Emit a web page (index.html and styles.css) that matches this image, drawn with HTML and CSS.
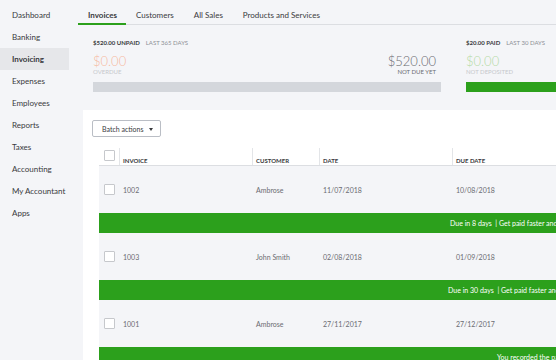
FILE: index.html
```html
<!DOCTYPE html>
<html lang="en">
<head>
    <meta charset="UTF-8">
    <meta name="viewport" content="width=device-width, initial-scale=1.0">
    <title>Invoicing</title>
    <link rel="stylesheet" href="styles.css">
</head>
<body>
    <aside class="sidebar">
        <a class="nav-item">Dashboard</a>
        <a class="nav-item">Banking</a>
        <a class="nav-item active">Invoicing</a>
        <a class="nav-item">Expenses</a>
        <a class="nav-item">Employees</a>
        <a class="nav-item">Reports</a>
        <a class="nav-item">Taxes</a>
        <a class="nav-item">Accounting</a>
        <a class="nav-item">My Accountant</a>
        <a class="nav-item">Apps</a>
    </aside>

    <main class="main">
        <nav class="tabs">
            <a class="tab active">Invoices</a>
            <a class="tab">Customers</a>
            <a class="tab">All Sales</a>
            <a class="tab">Products and Services</a>
        </nav>

        <section class="summary">
            <div class="summary-block">
                <div class="summary-title"><b>$520.00 UNPAID</b><span>LAST 365 DAYS</span></div>
                <div class="figures">
                    <div class="figure">
                        <div class="amount overdue">$0.00</div>
                        <div class="caption">OVERDUE</div>
                    </div>
                    <div class="figure right">
                        <div class="amount due">$520.00</div>
                        <div class="caption dark">NOT DUE YET</div>
                    </div>
                </div>
                <div class="bar grey"></div>
            </div>
            <div class="summary-block">
                <div class="summary-title"><b>$20.00 PAID</b><span>LAST 30 DAYS</span></div>
                <div class="figures">
                    <div class="figure">
                        <div class="amount deposit">$0.00</div>
                        <div class="caption">NOT DEPOSITED</div>
                    </div>
                </div>
                <div class="bar green"></div>
            </div>
        </section>

        <section class="panel">
            <button class="batch">Batch actions <span class="caret"></span></button>

            <div class="table">
                <div class="row head">
                    <div class="cell"><span class="check"></span></div>
                    <div class="cell">INVOICE</div>
                    <div class="cell">CUSTOMER</div>
                    <div class="cell">DATE</div>
                    <div class="cell">DUE DATE</div>
                </div>

                <div class="row">
                    <div class="cell"><span class="check"></span></div>
                    <div class="cell">1002</div>
                    <div class="cell">Ambrose</div>
                    <div class="cell">11/07/2018</div>
                    <div class="cell">10/08/2018</div>
                </div>
                <div class="banner">Due in 8 days &nbsp;| Get paid faster and easier with online payments</div>

                <div class="row">
                    <div class="cell"><span class="check"></span></div>
                    <div class="cell">1003</div>
                    <div class="cell">John Smith</div>
                    <div class="cell">02/08/2018</div>
                    <div class="cell">01/09/2018</div>
                </div>
                <div class="banner wide">Due in 30 days &nbsp;| Get paid faster and easier with online payments</div>

                <div class="row">
                    <div class="cell"><span class="check"></span></div>
                    <div class="cell">1001</div>
                    <div class="cell">Ambrose</div>
                    <div class="cell">27/11/2017</div>
                    <div class="cell">27/12/2017</div>
                </div>
                <div class="banner note">You recorded the payment on 27/11/2017</div>
            </div>
        </section>
    </main>
</body>
</html>
```

FILE: styles.css
```css
* {
    box-sizing: border-box;
}
body {
    margin: 0;
    width: 556px;
    height: 360px;
    overflow: hidden;
    display: flex;
    font-family: Lato, "Open Sans", Arial, sans-serif;
    color: #393a3d;
    background-color: #f4f5f8;
}

/* sidebar */
.sidebar {
    width: 78px;
    flex-shrink: 0;
    padding-top: 4px;
    display: flex;
    flex-direction: column;
}
.nav-item {
    width: 69px;
    height: 22px;
    line-height: 22px;
    padding-left: 12px;
    font-size: 8px;
    color: #393a3d;
    white-space: nowrap;
}
.nav-item.active {
    background-color: #e6e7ea;
    font-weight: bold;
}

/* main */
.main {
    flex: 1;
    min-width: 0;
    display: flex;
    flex-direction: column;
}
.tabs {
    display: flex;
    align-items: flex-start;
    height: 25px;
    border-bottom: 1px solid #dcdee2;
}
.tab {
    height: 24px;
    padding: 10px 10px 0;
    line-height: 10px;
    font-size: 8px;
    color: #393a3d;
    white-space: nowrap;
}
.tab.active {
    height: 25px;
    font-weight: bold;
    border-bottom: 2px solid #2ca01c;
    padding: 10px 9px 0 10px;
}

/* summary */
.summary {
    display: flex;
    gap: 25px;
    padding: 14px 0 18px 15px;
}
.summary-block {
    width: 348px;
    flex-shrink: 0;
}
.summary-title {
    font-size: 6px;
    line-height: 8px;
    color: #393a3d;
    white-space: nowrap;
}
.summary-title span {
    margin-left: 6px;
    color: #8d9096;
}
.figures {
    display: flex;
    justify-content: space-between;
    margin-top: 7px;
    padding-right: 5px;
}
.figure.right {
    text-align: right;
}
.amount {
    font-size: 13px;
    line-height: 14px;
    font-weight: 300;
}
.overdue { color: #f6b9a0; }
.due { color: #6b6c72; }
.deposit { color: #b5dba6; }
.caption {
    font-size: 6px;
    line-height: 7px;
    color: #c6c8cc;
    white-space: nowrap;
}
.caption.dark { color: #6b6c72; }
.bar {
    height: 10px;
    margin-top: 7px;
}
.bar.grey { background-color: #d4d7dc; }
.bar.green { background-color: #2ca01c; }

/* invoice panel */
.panel {
    flex: 1;
    margin-left: 5px;
    padding: 10px 0 0 9px;
    background-color: #fff;
}
.batch {
    display: block;
    height: 17px;
    width: 69px;
    padding: 0 0 0 9px;
    text-align: left;
    font-family: inherit;
    font-size: 7px;
    color: #393a3d;
    background-color: #fff;
    border: 1px solid #babec5;
    border-radius: 2px;
}
.caret {
    display: inline-block;
    margin-left: 4px;
    vertical-align: middle;
    border-left: 2.5px solid transparent;
    border-right: 2.5px solid transparent;
    border-top: 3px solid #393a3d;
}
.table {
    width: 620px;
    margin: 11px 0 0 7px;
}
.row {
    display: grid;
    grid-template-columns: 20px 133px 67px 133px 1fr;
    height: 47px;
    align-items: center;
    font-size: 7px;
    color: #6b6c72;
    background-color: #f4f5f8;
}
.row .cell {
    padding-left: 4px;
}
.row .cell:first-child {
    padding-left: 5px;
    display: flex;
}
.row.head {
    height: 18px;
    align-items: stretch;
    font-size: 6px;
    font-weight: bold;
    color: #393a3d;
    background-color: #fff;
    border-bottom: 1px solid #dcdee2;
}
.row.head .cell {
    display: flex;
    align-items: flex-end;
    padding: 0 0 1px 3px;
}
.row.head .cell + .cell {
    border-left: 1px solid #e3e5e8;
}
.row.head .cell:first-child {
    align-items: center;
    padding: 0 0 2px 5px;
}
.check {
    width: 11px;
    height: 11px;
    border: 1px solid #c6c8cc;
    border-radius: 1px;
    background-color: #fff;
}
.banner {
    height: 20px;
    line-height: 20px;
    padding-left: 351px;
    font-size: 7px;
    color: #fff;
    background-color: #2ca01c;
    white-space: nowrap;
    overflow: hidden;
}
.banner.wide { padding-left: 349px; }
.banner.note { padding-left: 398px; }
```
